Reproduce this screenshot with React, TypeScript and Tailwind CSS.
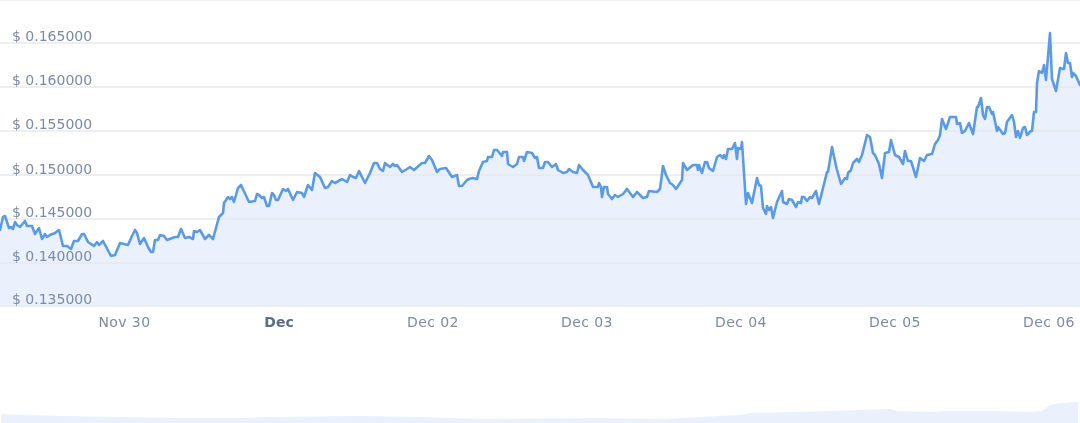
const linePoints = [
  [0,230],[3,217],[5,216],[7,222],[9,228],[11,227],[13,229],[15,222],[17,225],[20,227],[25,221],[27,226],[32,226],[35,234],[39,228],[42,239],[45,234],[47,237],[50,235],[55,233],[59,230],[63,246],[67,246],[71,249],[74,241],[78,241],[82,234],[84,234],[88,242],[94,246],[97,242],[99,245],[103,241],[111,256],[115,255],[120,243],[128,245],[132,236],[135,230],[137,233],[140,244],[144,238],[148,247],[151,252],[153,252],[155,240],[158,240],[160,235],[164,236],[167,240],[175,237],[178,237],[181,229],[185,238],[189,237],[193,239],[194,231],[197,232],[200,230],[205,239],[209,235],[213,239],[219,217],[223,213],[224,203],[228,197],[230,199],[232,197],[234,202],[238,188],[241,185],[249,202],[255,201],[257,194],[259,195],[262,198],[264,197],[267,206],[269,206],[272,193],[274,195],[276,200],[278,200],[283,189],[286,191],[288,189],[293,200],[297,192],[302,193],[304,197],[308,185],[312,190],[315,173],[320,177],[325,188],[328,187],[332,181],[335,183],[342,179],[347,182],[350,175],[353,177],[356,178],[359,171],
  [365,183],[370,173],[374,163],[377,163],[380,169],[383,171],[385,163],[390,167],[393,164],[395,166],[397,165],[402,172],[407,169],[410,167],[414,170],[422,163],[425,163],[429,156],[432,160],[437,172],[440,169],[446,168],[452,177],[457,175],[459,186],[462,186],[467,180],[469,179],[473,178],[477,179],[479,171],[483,162],[487,161],[488,157],[492,157],[494,150],[497,150],[502,156],[503,152],[507,152],[508,164],[513,167],[517,164],[519,157],[523,157],[524,161],[527,152],[532,153],[535,158],[537,157],[539,168],[543,168],[545,162],[548,162],[552,167],[556,164],[558,170],[563,173],[567,172],[569,169],[573,172],[577,173],[579,165],[583,170],[588,175],[593,187],[598,187],[599,183],[601,187],[602,197],[604,187],[607,187],[608,194],[612,199],[615,195],[618,197],[623,194],[627,189],[633,197],[637,192],[643,198],[647,197],[649,191],[657,192],[660,189],[663,166],[666,175],[670,183],[673,185],[676,189],[682,180],[683,163],[687,170],[693,165],[697,165],[698,170],[699,165],[702,173],[705,162],[707,162],[709,168],[713,171],[717,157],[720,155],
  [723,158],[724,155],[726,159],[728,149],[732,149],[735,143],[737,159],[738,148],[741,149],[742,142],[746,204],[748,193],[752,203],[757,178],[759,185],[761,186],[763,208],[766,214],[767,206],[769,210],[771,207],[773,218],[777,202],[782,191],[783,202],[787,204],[789,199],[792,200],[796,207],[798,202],[801,203],[802,197],[804,197],[807,201],[810,197],[812,198],[816,191],[819,204],[823,188],[827,172],[828,172],[832,147],[833,152],[837,170],[841,184],[845,178],[847,179],[848,173],[851,170],[853,163],[857,159],[859,162],[862,155],[867,135],[870,137],[873,153],[875,155],[879,164],[882,178],[885,153],[889,152],[891,140],[895,155],[899,157],[903,164],[905,151],[908,161],[911,161],[916,177],[920,158],[924,161],[927,155],[932,154],[935,144],[938,140],[940,135],[942,119],[946,129],[950,117],[956,117],[957,124],[960,123],[962,133],[965,131],[969,123],[973,134],[977,107],[978,107],[981,98],[983,115],[985,119],[987,107],[989,107],[992,114],[993,112],[997,131],[998,127],[1003,134],[1005,133],[1007,122],[1012,115],[1014,122],[1016,137],[1018,131],[1020,138],[1023,128],[1025,127],[1027,135],[1031,131],[1032,131],[1034,112],[1036,112],[1037,83],[1039,71],[1042,73],[1044,65],[1046,80],[1050,33],[1052,79],[1053,82],[1056,91],[1060,68],[1063,69],[1064,69],[1066,53],[1068,63],[1070,63],[1072,77],[1073,73],[1076,76],[1080,85],
];

const linePath = linePoints.map(([x, y]) => `${x},${y}`).join(" ");
const areaPath = `0,306 ${linePath} 1080,306`;

const gridLines = [43, 87, 131, 175, 219, 263, 306];

const priceLabels = [
  { y: 41, text: "$ 0.165000" },
  { y: 85, text: "$ 0.160000" },
  { y: 128.5, text: "$ 0.155000" },
  { y: 173.5, text: "$ 0.150000" },
  { y: 216.5, text: "$ 0.145000" },
  { y: 261, text: "$ 0.140000" },
  { y: 304, text: "$ 0.135000" },
];

const dateLabels = [
  { x: 124.5, text: "Nov 30", bold: false },
  { x: 279, text: "Dec", bold: true },
  { x: 433, text: "Dec 02", bold: false },
  { x: 587, text: "Dec 03", bold: false },
  { x: 741, text: "Dec 04", bold: false },
  { x: 895, text: "Dec 05", bold: false },
  { x: 1049, text: "Dec 06", bold: false },
];

// overview strip under the chart
const navigatorPoints =
  "1,414 60,416 120,417 180,418 240,418 270,417 360,416 420,417 480,419 600,418 660,419 720,416 742,415 748,413 800,412 890,409 898,411 930,412 945,411 1000,411 1030,412 1042,411 1050,405 1060,403 1078,402";

const App = () => {
  return (
    <main className="w-[1080px] h-[423px] bg-white overflow-hidden">
      <svg
        width={1080}
        height={423}
        viewBox="0 0 1080 423"
        className="block blur-[0.3px] font-['DejaVu_Sans',sans-serif]"
      >
        <line x1={0} x2={1080} y1={0.5} y2={0.5} stroke="#eef0f3" />

        <polygon points={areaPath} fill="#eaf1fc" />

        {gridLines.map((y) => (
          <line key={y} x1={0} x2={1080} y1={y} y2={y} stroke="#e6e9ee" strokeWidth={1.5} />
        ))}

        <polyline
          points={linePath}
          fill="none"
          stroke="#5b9be6"
          strokeWidth={2.6}
          strokeLinejoin="round"
          strokeLinecap="round"
        />

        {priceLabels.map((label) => (
          <text key={label.y} x={12} y={label.y} fontSize={14} fill="#7a8ba3">
            {label.text}
          </text>
        ))}

        {dateLabels.map((label) => (
          <text
            key={label.text}
            x={label.x}
            y={327}
            fontSize={14}
            textAnchor="middle"
            fill={label.bold ? "#5c6d87" : "#7a8ba3"}
            fontWeight={label.bold ? 700 : 400}
            letterSpacing={label.bold ? 0 : 0.4}
          >
            {label.text}
          </text>
        ))}

        <polygon points={`${navigatorPoints} 1078,423 1,423`} fill="#eaf1fc" />
      </svg>
    </main>
  );
};

export default App;
